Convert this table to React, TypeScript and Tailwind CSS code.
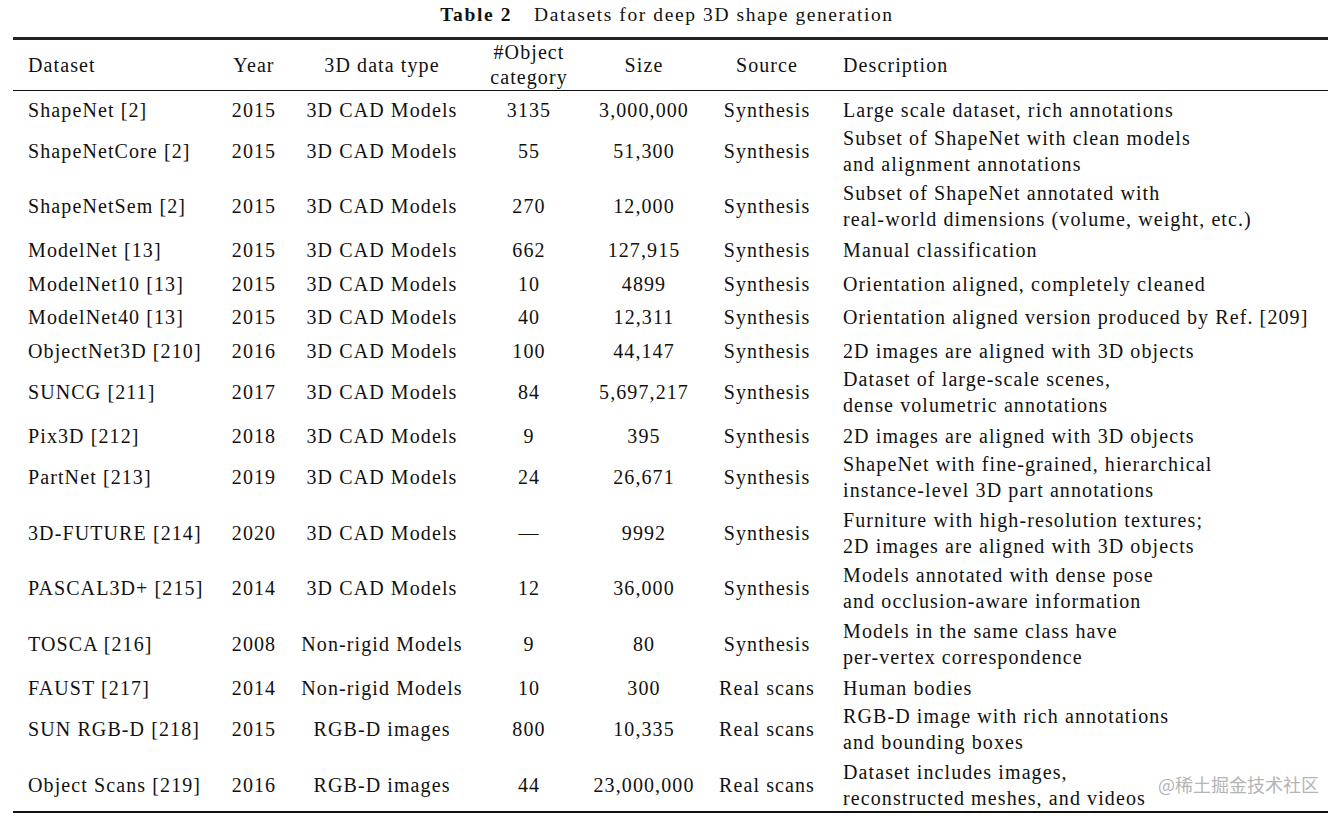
const rows: { name: string; year: string; type: string; cat: string; size: string; src: string; desc: string[]; gap: string }[] = [
  { name: "ShapeNet [2]", year: "2015", type: "3D CAD Models", cat: "3135", size: "3,000,000", src: "Synthesis", desc: ["Large scale dataset, rich annotations"], gap: "mb-[2px]" },
  { name: "ShapeNetCore [2]", year: "2015", type: "3D CAD Models", cat: "55", size: "51,300", src: "Synthesis", desc: ["Subset of ShapeNet with clean models", "and alignment annotations"], gap: "mb-[3px]" },
  { name: "ShapeNetSem [2]", year: "2015", type: "3D CAD Models", cat: "270", size: "12,000", src: "Synthesis", desc: ["Subset of ShapeNet annotated with", "real-world dimensions (volume, weight, etc.)"], gap: "mb-[5px]" },
  { name: "ModelNet [13]", year: "2015", type: "3D CAD Models", cat: "662", size: "127,915", src: "Synthesis", desc: ["Manual classification"], gap: "mb-[8px]" },
  { name: "ModelNet10 [13]", year: "2015", type: "3D CAD Models", cat: "10", size: "4899", src: "Synthesis", desc: ["Orientation aligned, completely cleaned"], gap: "mb-[7px]" },
  { name: "ModelNet40 [13]", year: "2015", type: "3D CAD Models", cat: "40", size: "12,311", src: "Synthesis", desc: ["Orientation aligned version produced by Ref. [209]"], gap: "mb-[8px]" },
  { name: "ObjectNet3D [210]", year: "2016", type: "3D CAD Models", cat: "100", size: "44,147", src: "Synthesis", desc: ["2D images are aligned with 3D objects"], gap: "mb-[2px]" },
  { name: "SUNCG [211]", year: "2017", type: "3D CAD Models", cat: "84", size: "5,697,217", src: "Synthesis", desc: ["Dataset of large-scale scenes,", "dense volumetric annotations"], gap: "mb-[5px]" },
  { name: "Pix3D [212]", year: "2018", type: "3D CAD Models", cat: "9", size: "395", src: "Synthesis", desc: ["2D images are aligned with 3D objects"], gap: "mb-[2px]" },
  { name: "PartNet [213]", year: "2019", type: "3D CAD Models", cat: "24", size: "26,671", src: "Synthesis", desc: ["ShapeNet with fine-grained, hierarchical", "instance-level 3D part annotations"], gap: "mb-[4px]" },
  { name: "3D-FUTURE [214]", year: "2020", type: "3D CAD Models", cat: "—", size: "9992", src: "Synthesis", desc: ["Furniture with high-resolution textures;", "2D images are aligned with 3D objects"], gap: "mb-[3px]" },
  { name: "PASCAL3D+ [215]", year: "2014", type: "3D CAD Models", cat: "12", size: "36,000", src: "Synthesis", desc: ["Models annotated with dense pose", "and occlusion-aware information"], gap: "mb-[4px]" },
  { name: "TOSCA [216]", year: "2008", type: "Non-rigid Models", cat: "9", size: "80", src: "Synthesis", desc: ["Models in the same class have", "per-vertex correspondence"], gap: "mb-[5px]" },
  { name: "FAUST [217]", year: "2014", type: "Non-rigid Models", cat: "10", size: "300", src: "Real scans", desc: ["Human bodies"], gap: "mb-[2px]" },
  { name: "SUN RGB-D [218]", year: "2015", type: "RGB-D images", cat: "800", size: "10,335", src: "Real scans", desc: ["RGB-D image with rich annotations", "and bounding boxes"], gap: "mb-[4px]" },
  { name: "Object Scans [219]", year: "2016", type: "RGB-D images", cat: "44", size: "23,000,000", src: "Real scans", desc: ["Dataset includes images,", "reconstructed meshes, and videos"], gap: "mb-0" },
]

const cols = "grid grid-cols-[212px_58px_198px_96px_134px_112px_1fr]"

export default function App() {
  return (
    <div className="relative h-[819px] w-[1341px] overflow-hidden bg-white text-[#111] font-['Liberation_Serif','Times_New_Roman',serif]">
      <div className="flex h-[29px] items-center justify-center pr-[7px] text-[19.5px] tracking-[1.6px]">
        <span className="font-bold">Table 2</span>
        <span className="ml-[22px]">Datasets for deep 3D shape generation</span>
      </div>
      <div className="mx-[13px] mt-[8px] border-t-[3px] border-[#222]" />
      <div className={`${cols} mx-[13px] h-[50px] items-center text-[20px] leading-[26px] tracking-[1.1px]`}>
        <div className="pl-[15px]">Dataset</div>
        <div className="text-center">Year</div>
        <div className="text-center">3D data type</div>
        <div className="text-center leading-[25px]">
          <div>#Object</div>
          <div>category</div>
        </div>
        <div className="text-center">Size</div>
        <div className="text-center">Source</div>
        <div className="pl-[20px]">Description</div>
      </div>
      <div className="mx-[13px] border-t-[1.5px] border-[#111]" />
      <div className="mx-[13px] pt-[6px]">
        {rows.map((r) => (
          <div key={r.name} className={`${cols} ${r.gap} items-center text-[20px] leading-[26px] tracking-[1.1px]`}>
            <div className="whitespace-nowrap pl-[15px]">{r.name}</div>
            <div className="text-center">{r.year}</div>
            <div className="whitespace-nowrap text-center">{r.type}</div>
            <div className="text-center">{r.cat}</div>
            <div className="text-center">{r.size}</div>
            <div className="whitespace-nowrap text-center">{r.src}</div>
            <div className="whitespace-nowrap pl-[20px]">
              {r.desc.map((d) => (
                <div key={d}>{d}</div>
              ))}
            </div>
          </div>
        ))}
      </div>
      <div className="mx-[13px] border-t-[2px] border-[#111]" />
      <div className="absolute left-[1158px] top-[771px] text-[18px] text-[#b4b4b4] font-['Noto_Sans_CJK_SC',sans-serif]">
        @稀土掘金技术社区
      </div>
    </div>
  )
}
